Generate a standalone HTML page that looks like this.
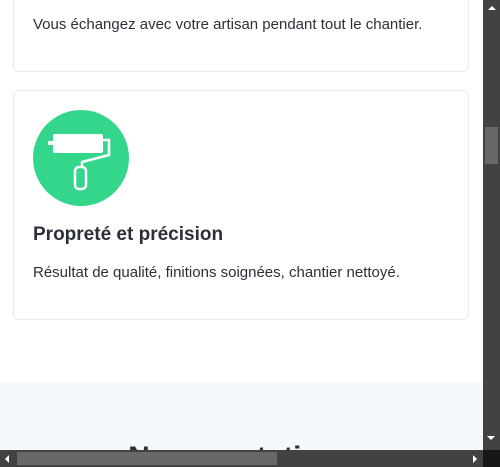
<!DOCTYPE html>
<html><head><style>
body{margin:0;width:500px;height:467px;overflow:hidden;background:#fff;font-family:"Liberation Sans",sans-serif;position:relative;color:#2b2f38}
.card{position:absolute;left:13px;width:456px;border:1px solid #e8eaed;border-radius:6px;background:#fff;box-sizing:border-box}
.gray{position:absolute;left:0;top:382px;width:483px;height:85px;background:#f5f9fd;overflow:hidden}
.vs{position:absolute;left:483px;top:0;width:17px;height:450px;background:#424242}
.hs{position:absolute;left:0;top:450px;width:483px;height:17px;background:#424242}
.corner{position:absolute;left:483px;top:450px;width:17px;height:17px;background:#171717}
</style></head><body>
<div class="card" style="top:-10px;height:82px"><div style="position:absolute;left:19px;top:25px;font-size:15px">Vous échangez avec votre artisan pendant tout le chantier.</div></div>
<div class="card" style="top:90px;height:230px">
<svg style="position:absolute;left:19px;top:19px" width="96" height="96" viewBox="0 0 96 96">
<circle cx="48" cy="48" r="48" fill="#33d68a"/>
<rect x="20" y="24" width="50" height="19" rx="2" fill="#fff"/>
<rect x="15" y="31" width="6" height="4" fill="#fff"/>
<path d="M70 30 H76 V45 L49 52 V57" stroke="#fff" stroke-width="2.5" fill="none"/>
<rect x="42" y="57" width="11" height="22" rx="4" fill="none" stroke="#fff" stroke-width="2.5"/>
</svg>
<div style="position:absolute;left:19px;top:133px;font-size:19px;font-weight:bold">Propreté et précision</div>
<div style="position:absolute;left:19px;top:173px;font-size:15px">Résultat de qualité, finitions soignées, chantier nettoyé.</div>
</div>
<div class="gray"><div style="position:absolute;left:0;width:483px;top:59px;text-align:center;font-size:30px;font-weight:bold">Nos prestations</div></div>
<div class="vs"><div style="position:absolute;left:5px;top:6px;border:4px solid transparent;border-bottom:4px solid #fff;border-top:0"></div><div style="position:absolute;left:2px;top:127px;width:13px;height:37px;background:#686868"></div><div style="position:absolute;left:4px;top:436px;border:4px solid transparent;border-top:4px solid #fff;border-bottom:0"></div></div>
<div class="hs"><div style="position:absolute;left:17px;top:2px;width:260px;height:13px;background:#686868"></div><div style="position:absolute;left:5px;top:5px;border:4px solid transparent;border-right:4px solid #fff;border-left:0"></div><div style="position:absolute;left:473px;top:5px;border:4px solid transparent;border-left:4px solid #fff;border-right:0"></div></div>
<div class="corner"></div>
</body></html>
